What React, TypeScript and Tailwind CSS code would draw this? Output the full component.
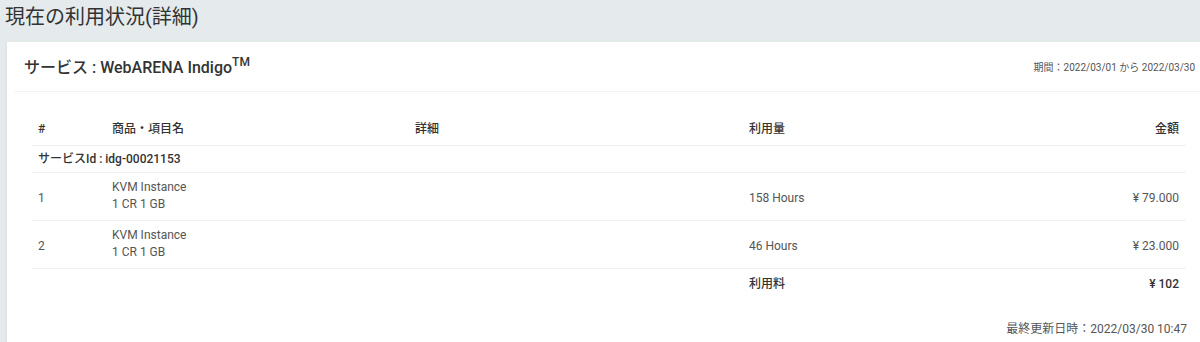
import React from "react";

const font = { fontFamily: "Roboto, 'Noto Sans CJK JP', sans-serif" };

interface Item {
  no: number;
  name: string;
  spec: string;
  usage: string;
  amount: string;
}

const items: Item[] = [
  { no: 1, name: "KVM Instance", spec: "1 CR 1 GB", usage: "158 Hours", amount: "¥ 79.000" },
  { no: 2, name: "KVM Instance", spec: "1 CR 1 GB", usage: "46 Hours", amount: "¥ 23.000" },
];

const App: React.FC = () => {
  return (
    <div
      className="h-[342px] w-[1200px] overflow-hidden bg-[#e5eaed] text-[#555]"
      style={font}
    >
      <div className="h-[42px] pl-[5px] pt-[3px] text-[20px] leading-[28px] text-[#333]">
        現在の利用状況(詳細)
      </div>
      <div className="ml-[7px] bg-white shadow-[0_1px_3px_rgba(0,0,0,0.08)] h-[320px]">
        <div className="ml-[8px] flex h-[50px] items-center justify-between border-b border-[#f0f2f3] pl-[9px] pr-[5px]">
          <div className="text-[16px] font-medium text-[#333] pt-[2px]">
            サービス : WebARENA Indigo
            <sup className="text-[12px] relative top-[-7px]">TM</sup>
          </div>
          <div className="text-[10px] text-[#555] pt-[1px]">期間：2022/03/01 から 2022/03/30</div>
        </div>
        <div className="pl-[25px] pr-[7px] pt-[21px]">
          <table className="w-[1154px] border-collapse text-[12px]">
            <thead>
              <tr className="h-[32px] border-b border-[#eef0f1] text-[#333] font-medium">
                <th className="w-[74px] pl-[6px] text-left font-medium">#</th>
                <th className="w-[303px] pl-[6px] text-left font-medium">商品・項目名</th>
                <th className="w-[334px] pl-[6px] text-left font-medium">詳細</th>
                <th className="pl-[6px] text-left font-medium">利用量</th>
                <th className="pr-[7px] text-right font-medium">金額</th>
              </tr>
            </thead>
            <tbody>
              <tr className="h-[27px] border-b border-[#eef0f1]">
                <td colSpan={5} className="pl-[6px] font-medium text-[#333]">
                  サービスId : idg-00021153
                </td>
              </tr>
              {items.map((it) => (
                <tr key={it.no} className="h-[48px] border-b border-[#eef0f1]">
                  <td className="pl-[6px] pt-[3px]">{it.no}</td>
                  <td className="pl-[6px] leading-[17px]">
                    <div>{it.name}</div>
                    <div>{it.spec}</div>
                  </td>
                  <td />
                  <td className="pl-[6px] pt-[3px]">{it.usage}</td>
                  <td className="pr-[7px] pt-[3px] text-right">{it.amount}</td>
                </tr>
              ))}
              <tr className="h-[31px] text-[#333] font-medium">
                <td />
                <td />
                <td />
                <td className="pl-[6px] pt-[1px]">利用料</td>
                <td className="pr-[7px] pt-[1px] text-right">¥ 102</td>
              </tr>
            </tbody>
          </table>
          <div className="mt-[21px] pr-[6px] text-right text-[12px] text-[#555]">
            最終更新日時：2022/03/30 10:47
          </div>
          <div className="mt-[2px] pl-[1px] text-[12px] font-medium text-[#333]">注意</div>
        </div>
      </div>
    </div>
  );
};

export default App;
